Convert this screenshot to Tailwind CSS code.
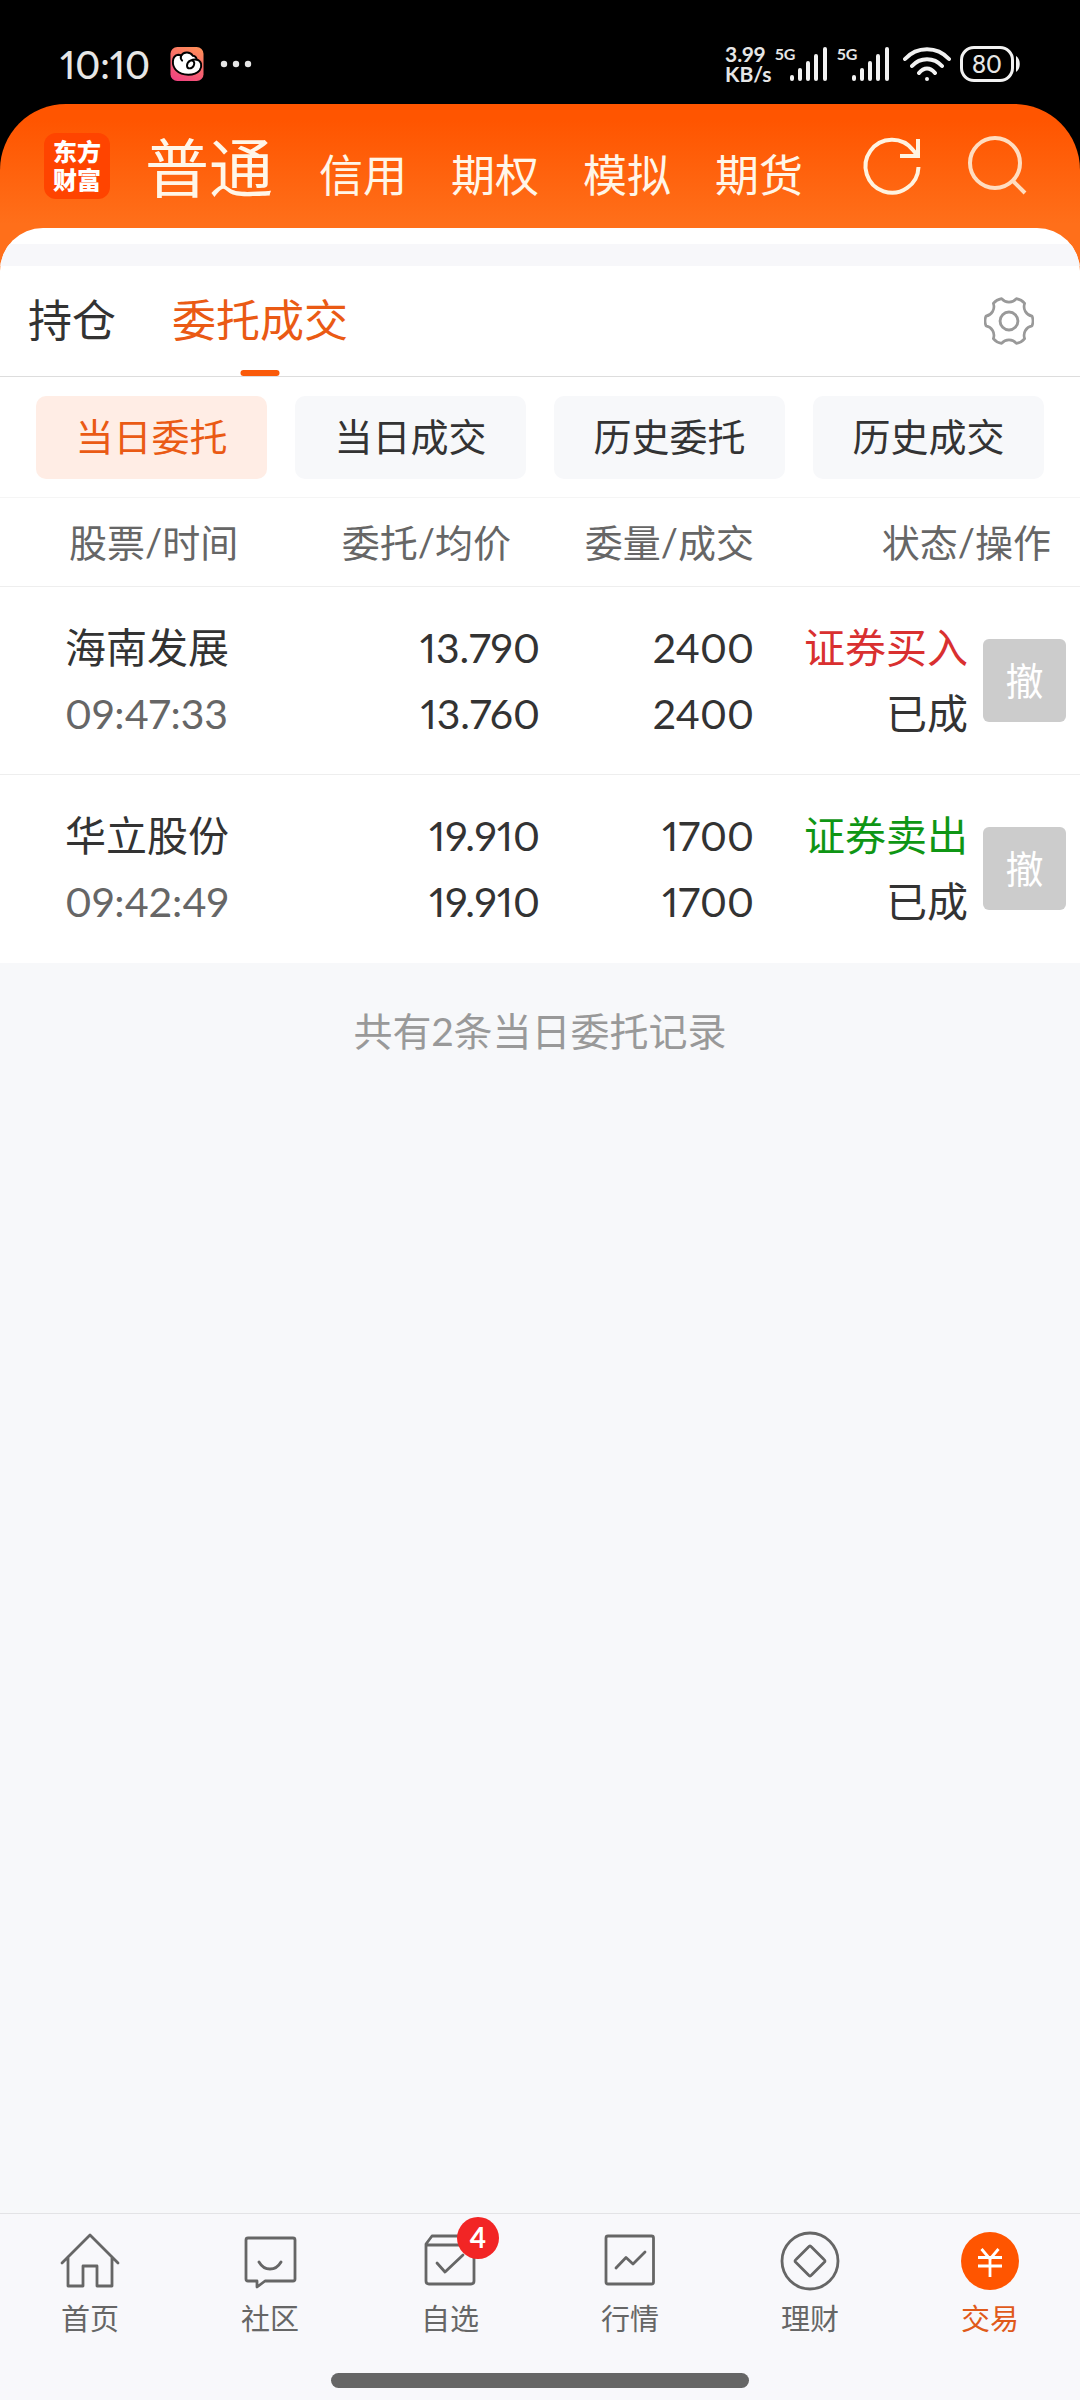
<!DOCTYPE html>
<html lang="zh-CN">
<head>
<meta charset="utf-8">
<meta name="viewport" content="width=device-width, initial-scale=1">
<title>委托成交</title>
<script src="https://cdn.jsdelivr.net/npm/@tailwindcss/browser@4"></script>
</head>
<body class="bg-black text-[#333] font-['Lato','Noto_Sans_CJK_SC',sans-serif] proportional-nums">
<div class="flex min-h-screen flex-col">

  <!-- Status bar -->
  <div class="flex h-[104px] items-center justify-between pt-6 pr-[60px] pl-[60px] text-[#e6e6e6]">
    <div class="flex items-center">
      <span class="w-[110px] text-[38px] leading-10 font-medium">10:10</span>
      <svg class="h-[34px] w-[34px]" viewBox="0 0 34 35" aria-hidden="true">
        <defs><linearGradient id="app" x1="0.7" y1="0" x2="0.3" y2="1"><stop offset="0" stop-color="#ff8c5a"/><stop offset="1" stop-color="#f0457f"/></linearGradient></defs>
        <rect width="34" height="35" rx="7" fill="url(#app)"/>
        <path d="M11 9C13 5 20 4 23 9C26 9 27 12 27 13C32 14 33 20 30 24C25 30 12 30 6 24C1 19 1 9 8 8C10 8 11 9 11 9Z" fill="#fff" stroke="#000" stroke-width="2"/>
        <path d="M11 9C10 11 11 13 12 14M27 13C23 12 17 15 17 19C17 23 22 23 24 19C26 14 20 12 18 16" fill="none" stroke="#000" stroke-width="2" stroke-linecap="round"/>
      </svg>
      <svg class="ml-4 h-2 w-8" viewBox="0 0 32 8" fill="#e6e6e6" aria-hidden="true"><circle cx="4" cy="4" r="3.200"/><circle cx="16" cy="4" r="3.200"/><circle cx="28" cy="4" r="3.200"/></svg>
    </div>
    <div class="flex h-9 items-center">
      <div class="w-[50px] text-[21px] leading-5 font-bold"><div>3.99</div><div>KB/s</div></div>
      <div class="flex h-9 w-[62px]">
        <span class="w-[15px] text-[16px] leading-4 font-bold whitespace-nowrap">5G</span>
        <svg class="h-9 w-10" viewBox="0 0 40 36" stroke="#f2f2f2" stroke-width="4" stroke-linecap="round" aria-hidden="true"><path d="M2 31V33M10 24V33M18 17V33M26 10V33M35 3V33"/></svg>
      </div>
      <div class="flex h-9 w-[66px]">
        <span class="w-[15px] text-[16px] leading-4 font-bold whitespace-nowrap">5G</span>
        <svg class="h-9 w-10" viewBox="0 0 40 36" stroke="#f2f2f2" stroke-width="4" stroke-linecap="round" aria-hidden="true"><path d="M2 31V33M10 24V33M18 17V33M26 10V33M35 3V33"/></svg>
      </div>
      <svg class="h-9 w-12" viewBox="0 0 48 36" fill="none" stroke="#f2f2f2" stroke-width="4" stroke-linecap="round" aria-hidden="true"><path d="M2 13C14 0 34 0 46 13M9 20C17 11 31 11 39 20M16 27C21 21 27 21 32 27"/><circle cx="24" cy="33" r="1" stroke-width="2" fill="#f2f2f2"/></svg>
      <div class="ml-[9px] flex h-9 w-[54px] items-center justify-center rounded-[14px] border-[3px] border-[#f2f2f2] text-[24px] leading-6 font-medium"><span>80</span></div>
      <svg class="ml-[2px] h-4 w-1" viewBox="0 0 4 16" fill="#f2f2f2" aria-hidden="true"><path d="M0 0C5 3 5 13 0 16Z"/></svg>
    </div>
  </div>

  <div class="flex flex-1 flex-col rounded-t-[66px] bg-[linear-gradient(#ff5500_0px,#ff5500_16px,#ff6f1a_120px)]">
    <!-- Account header -->
    <header class="flex h-[124px] items-center justify-between pr-[52px] pl-11 text-[#fff6e8]">
      <div class="flex items-center">
        <div class="flex h-[66px] w-[66px] flex-col items-center justify-center rounded-xl bg-[#ff4400] text-[24px] leading-7 font-black text-white"><span>东方</span><span>财富</span></div>
        <nav class="ml-[35px] flex items-baseline gap-11 pt-[10px] text-[44px] leading-[68px]">
          <a href="#" class="mr-[2px] text-[64px]">普通</a>
          <a href="#">信用</a>
          <a href="#">期权</a>
          <a href="#">模拟</a>
          <a href="#">期货</a>
        </nav>
      </div>
      <div class="flex items-center gap-10">
        <button type="button" aria-label="刷新"><svg class="h-16 w-16" viewBox="0 0 64 64" fill="none" stroke="#fff3e0" stroke-width="4"><path d="M58.500 33A26.500 26.500 0 1 1 53 16L58 22M58 5V22H40"/></svg></button>
        <button type="button" aria-label="搜索"><svg class="h-16 w-16" viewBox="0 0 64 64" fill="none" stroke="#ffddc0" stroke-width="4"><circle cx="31" cy="29" r="25"/><path d="M48 46L61 59"/></svg></button>
      </div>
    </header>

    <div class="flex flex-1 flex-col overflow-hidden rounded-t-[43px] bg-white">
      <div class="mt-4 h-[22px] bg-[#f7f7fa]"></div>

      <!-- Section tabs -->
      <div class="flex h-[111px] items-center justify-between border-b border-[#ddd] pr-[46px] pl-7">
        <nav class="flex h-full gap-14 text-[44px] leading-[108px]">
          <a href="#">持仓</a>
          <a href="#" class="relative text-[#ea5a14]">委托成交<span class="absolute bottom-0 left-1/2 h-[6px] w-[39px] -translate-x-1/2 rounded-full bg-[#fa5a0a]"></span></a>
        </nav>
        <button type="button" aria-label="设置"><svg class="h-[50px] w-[50px]" viewBox="-26 -26 52 52" fill="none" stroke="#999" stroke-width="2.8" stroke-linejoin="round"><path d="M24 -5A14 14 0 0 1 24 5A10 10 0 0 0 16.3 18.3A14 14 0 0 1 7.7 23.3A10 10 0 0 0 -7.7 23.3A14 14 0 0 1 -16.3 18.3A10 10 0 0 0 -24 5A14 14 0 0 1 -24 -5A10 10 0 0 0 -16.3 -18.3A14 14 0 0 1 -7.7 -23.3A10 10 0 0 0 7.7 -23.3A14 14 0 0 1 16.3 -18.3A10 10 0 0 0 24 -5Z"/><circle r="9.3" stroke-width="3"/></svg></button>
      </div>

      <!-- Order filters -->
      <div class="grid grid-cols-4 gap-7 border-b border-[#f5f5f5] px-9 pt-[19px] pb-[18px] text-[38px]">
        <button type="button" class="h-[83px] rounded-[10px] bg-[#ffede5] pb-[2px] text-[#ea5a14]">当日委托</button>
        <button type="button" class="h-[83px] rounded-[10px] bg-[#f7f8fa] pb-[2px]">当日成交</button>
        <button type="button" class="h-[83px] rounded-[10px] bg-[#f7f8fa] pb-[2px]">历史委托</button>
        <button type="button" class="h-[83px] rounded-[10px] bg-[#f7f8fa] pb-[2px]">历史成交</button>
      </div>

      <!-- Orders -->
      <table class="w-full table-fixed border-collapse text-right">
        <colgroup><col class="w-[24%]"><col class="w-[26%]"><col class="w-[20%]"><col class="w-[20%]"><col class="w-[10%]"></colgroup>
        <thead class="text-[38px] leading-[88px] whitespace-nowrap text-[#666]">
          <tr class="border-b border-[#eee]">
            <th class="pl-[69px] text-left font-normal">股票/时间</th>
            <th class="pr-[29px] font-normal">委托/均价</th>
            <th class="pr-[2px] font-normal">委量/成交</th>
            <th colspan="2" class="pr-[29px] font-normal">状态/操作</th>
          </tr>
        </thead>
        <tbody class="text-[41px] leading-[66px] whitespace-nowrap">
          <tr class="h-[188px] border-b border-[#eee]">
            <td class="pl-[65px] text-left"><div>海南发展</div><div class="text-[#666]">09:47:33</div></td>
            <td><div>13.790</div><div>13.760</div></td>
            <td class="pr-[2px]"><div>2400</div><div>2400</div></td>
            <td class="pr-1"><div class="text-[#d93030]">证券买入</div><div>已成</div></td>
            <td class="pr-[14px]"><button type="button" class="h-[83px] w-[83px] rounded-md bg-[#ccc] pb-[2px] text-[38px] leading-[78px] text-white">撤</button></td>
          </tr>
          <tr class="h-[188px]">
            <td class="pl-[65px] text-left"><div>华立股份</div><div class="text-[#666]">09:42:49</div></td>
            <td><div>19.910</div><div>19.910</div></td>
            <td class="pr-[2px]"><div>1700</div><div>1700</div></td>
            <td class="pr-1"><div class="text-[#0f9614]">证券卖出</div><div>已成</div></td>
            <td class="pr-[14px]"><button type="button" class="h-[83px] w-[83px] rounded-md bg-[#ccc] pb-[2px] text-[38px] leading-[78px] text-white">撤</button></td>
          </tr>
        </tbody>
      </table>

      <main class="flex-1 bg-[#f7f8fa] pt-10 text-center text-[39px] leading-14 text-[#999]">共有2条当日委托记录</main>

      <!-- Bottom navigation -->
      <footer class="border-t border-[#e3e3e6] bg-[#f8f8fb] pb-3">
        <nav class="grid h-[159px] grid-cols-6 pt-[17px] text-[29px] leading-10 text-[#666]">
          <a href="#" class="flex flex-col items-center gap-2"><svg class="h-[60px] w-[60px]" viewBox="-30 -30 60 60" fill="none" stroke="#666" stroke-width="2.8" stroke-linecap="round" stroke-linejoin="round" aria-hidden="true"><path d="M-28 2L0 -26L28 2M-22 -4V25H-7V5H7V25H22V-4"/></svg><span>首页</span></a>
          <a href="#" class="flex flex-col items-center gap-2"><svg class="h-[60px] w-[60px]" viewBox="-30 -30 60 60" fill="none" stroke="#666" stroke-width="2.8" stroke-linecap="round" stroke-linejoin="round" aria-hidden="true"><path d="M-22 -23H23Q25 -23 25 -21V18Q25 20 23 20H-5L-13 26V20H-22Q-24 20 -24 18V-21Q-24 -23 -22 -23ZM-11 1Q-7 8 0 8T11 1"/></svg><span>社区</span></a>
          <a href="#" class="flex flex-col items-center gap-2"><span class="relative"><svg class="h-[60px] w-[60px]" viewBox="-30 -30 60 60" fill="none" stroke="#666" stroke-width="2.8" stroke-linecap="round" stroke-linejoin="round" aria-hidden="true"><path d="M-24 -16H24V20Q24 23 21 23H-21Q-24 23 -24 20V-17L-18 -25H18L24 -16M-13 2L-5 11L13 -6"/></svg><span class="absolute -top-[14px] left-[37px] h-[42px] w-[42px] rounded-full bg-[#f22525] text-center text-[28px] leading-10 font-bold text-white">4</span></span><span>自选</span></a>
          <a href="#" class="flex flex-col items-center gap-2"><svg class="h-[60px] w-[60px]" viewBox="-30 -30 60 60" fill="none" stroke="#666" stroke-width="2.8" stroke-linecap="round" stroke-linejoin="round" aria-hidden="true"><rect x="-24" y="-25" width="47.500" height="48" rx="2"/><path d="M-14 7L-4 -3.500L3 3L15 -9"/></svg><span>行情</span></a>
          <a href="#" class="flex flex-col items-center gap-2"><svg class="h-[60px] w-[60px]" viewBox="-30 -30 60 60" fill="none" stroke="#666" stroke-width="2.8" stroke-linejoin="round" aria-hidden="true"><circle r="28"/><path d="M-1.500 -14Q0 -16 1.500 -14L14 -1.500Q16 0 14 1.500L1.500 14Q0 16 -1.500 14L-14 1.500Q-16 0 -14 -1.500Z"/></svg><span>理财</span></a>
          <a href="#" class="flex flex-col items-center gap-2 text-[#e05a1a]"><svg class="h-[60px] w-[60px]" viewBox="-30 -30 60 60" fill="none" stroke="#fff" stroke-width="2.800" aria-hidden="true"><circle r="29" fill="#ff5500" stroke="none"/><path d="M-8.500 -12L0 -2L8.500 -12M0 -2V16M-12 -3.500H12M-12 5H12"/></svg><span>交易</span></a>
        </nav>
        <div class="mx-auto h-[15px] w-[418px] rounded-full bg-[#666]"></div>
      </footer>
    </div>
  </div>
</div>
</body>
</html>
